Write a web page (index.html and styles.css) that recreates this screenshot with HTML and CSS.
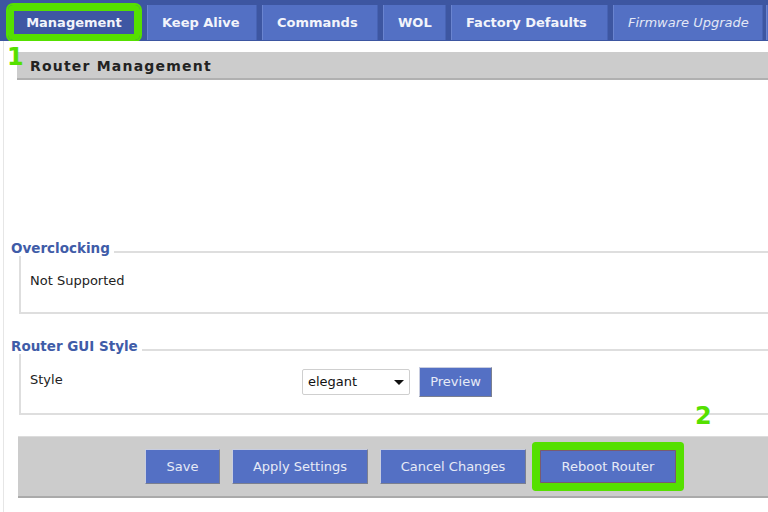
FILE: index.html
```html
<!DOCTYPE html>
<html>
<head>
<meta charset="utf-8">
<link rel="stylesheet" href="styles.css">
</head>
<body>
<div class="page">
  <nav class="tabs">
    <div class="tab active">Management</div>
    <div class="tab">Keep Alive</div>
    <div class="tab">Commands</div>
    <div class="tab">WOL</div>
    <div class="tab">Factory Defaults</div>
    <div class="tab ital">Firmware Upgrade</div>
    <div class="tab stub"></div>
  </nav>
  <span class="mark mark-1">1</span>
  <main class="main">
    <h2 class="header">Router Management</h2>

    <section class="set set-oc">
      <div class="legend-row"><span class="legend">Overclocking</span><span class="rule"></span></div>
      <div class="box box-oc">
        <div class="row"><span class="label label-oc">Not Supported</span></div>
      </div>
    </section>

    <section class="set set-gui">
      <div class="legend-row"><span class="legend">Router GUI Style</span><span class="rule"></span></div>
      <div class="box box-gui">
        <div class="row grid">
          <span class="label">Style</span>
          <div class="controls">
            <span class="select-wrap">
              <select class="select"><option>elegant</option></select>
            </span>
            <button class="btn preview">Preview</button>
          </div>
        </div>
      </div>
    </section>

    <div class="actions">
      <button class="btn act save">Save</button>
      <button class="btn act apply">Apply Settings</button>
      <button class="btn act cancel">Cancel Changes</button>
      <button class="btn act reboot">Reboot Router</button>
      <span class="mark mark-2">2</span>
    </div>
  </main>
</div>
</body>
</html>
```
FILE: styles.css
```css
html, body {
  margin: 0;
  padding: 0;
  background: #ffffff;
  width: 768px;
  height: 512px;
  overflow: hidden;
}
.page {
  position: relative;
  width: 768px;
  height: 512px;
  font-family: "DejaVu Sans", Verdana, sans-serif;
}
.tabs {
  display: flex;
  gap: 5px;
  height: 41px;
  padding: 5px 0 0 8px;
  box-sizing: border-box;
  background: #3d56a1;
  white-space: nowrap;
  overflow: hidden;
}
.tab {
  flex: none;
  height: 35px;
  line-height: 36px;
  padding: 0 15px;
  background: #5370c4;
  color: #f2f4fb;
  font-weight: bold;
  font-size: 13px;
  box-shadow: inset 1px 0 0 #6a84cf, inset -1px 0 0 #4763b4;
}
.tab.active {
  width: 132px;
  padding: 0;
  text-align: center;
  background: #3e57a3;
  border-radius: 5px;
  box-shadow: inset 0 0 0 6px #55e000, 0 0 0 2px #55e000;
  margin-right: 2px;
}
.tab:nth-child(2) { width: 80px; }
.tab:nth-child(3) { width: 86px; }
.tab:nth-child(4) { width: 33px; }
.tab:nth-child(5) { width: 127px; }
.tab.ital {
  width: 120px;
  font-weight: normal;
  font-style: italic;
  color: #e3e8f6;
}
.tab.stub {
  width: 40px;
  margin-left: -2px;
}
.mark {
  position: absolute;
  color: #55e000;
  font-family: "DejaVu Sans", sans-serif;
  font-weight: bold;
  font-size: 24px;
  line-height: 24px;
}
.mark-1 { left: 7px; top: 45px; }
.mark-2 { left: 677px; top: -33px; }

.main {
  margin-left: 3px;
  border-left: 1px solid #e6e6e6;
  height: 471px;
  padding-top: 11px;
  box-sizing: border-box;
}
.header {
  margin: 0 0 0 13px;
  height: 26px;
  line-height: 28px;
  padding-left: 13px;
  background: #cccccc;
  border-bottom: 2px solid #b0b0b0;
  color: #222222;
  font-size: 14px;
  font-weight: bold;
  letter-spacing: 1.2px;
}
.set-oc { margin-top: 160px; }
.set-gui { margin-top: 24px; }
.legend-row {
  display: flex;
  height: 17px;
  padding-left: 7px;
}
.legend {
  color: #3f5ca8;
  font-size: 13.5px;
  font-weight: bold;
  line-height: 17px;
}
.rule {
  flex: 1;
  margin: 11px 0 0 4px;
  height: 0;
  border-top: 2px solid #dedede;
}
.box {
  margin-left: 15px;
  border-left: 2px solid #dedede;
  border-bottom: 2px solid #dedede;
  display: flex;
  align-items: center;
  padding-left: 9px;
  color: #222222;
  font-size: 13px;
}
.box-oc { height: 56px; margin-top: -1px; }
.box-gui { height: 59px; margin-top: -1px; }
.row.grid {
  display: grid;
  grid-template-columns: 272px auto;
  align-items: center;
  width: 100%;
  padding-bottom: 4px;
}
.label { padding-bottom: 4px; }
.label-oc { display: block; padding-bottom: 8px; }
.controls {
  display: flex;
  align-items: center;
  gap: 9px;
}
.select-wrap {
  position: relative;
  display: inline-block;
}
.select-wrap::after {
  content: "";
  position: absolute;
  right: 6px;
  top: 11px;
  border-left: 5px solid transparent;
  border-right: 5px solid transparent;
  border-top: 5px solid #111111;
  pointer-events: none;
}
.select {
  appearance: none;
  -webkit-appearance: none;
  width: 108px;
  height: 26px;
  border: 1px solid #cfcfcf;
  border-radius: 2px;
  background: #ffffff;
  padding: 0 0 0 5px;
  font-family: "DejaVu Sans", Verdana, sans-serif;
  font-size: 13px;
  color: #111111;
}
.btn {
  font-family: "DejaVu Sans", Verdana, sans-serif;
  background: #5470c4;
  color: #e6eaf6;
  font-size: 13px;
  border: 1px solid;
  border-color: #c8cde0 #7a7f90 #7a7f90 #c8cde0;
  padding: 0;
  cursor: pointer;
}
.preview {
  width: 73px;
  height: 30px;
}
.actions {
  position: relative;
  margin: 21px 0 0 14px;
  border-top: 1px solid #dcdcdc;
  border-bottom: 2px solid #aaaaaa;
  background: #cccccc;
  display: flex;
  align-items: flex-start;
  padding: 12px 0 0 127px;
  box-sizing: content-box;
  height: 47px;
}
.act {
  height: 35px;
  margin-right: 12px;
}
.save { width: 75px; }
.apply { width: 136px; }
.cancel { width: 146px; margin-right: 14px; }
.reboot {
  width: 136px;
  border: none;
  box-shadow: inset 0 0 0 1px #7a5a70, 0 0 0 8px #55e000;
  border-radius: 1px;
  height: 33px;
  margin-top: 1px;
}
```
